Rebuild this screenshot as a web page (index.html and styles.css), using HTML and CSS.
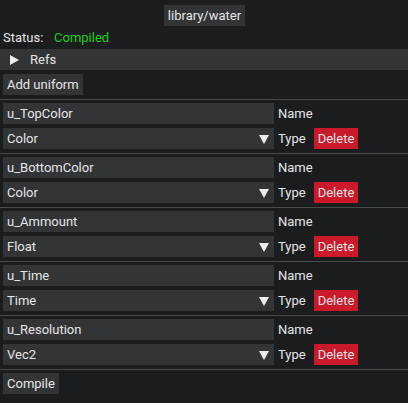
FILE: index.html
```html
<!DOCTYPE html>
<html>
<head>
<meta charset="utf-8">
<link rel="stylesheet" href="styles.css">
</head>
<body>
<div class="page">
  <div class="top"><div class="btn">library/water</div></div>
  <div class="status"><span class="status-label">Status:</span><span class="ok">Compiled</span></div>
  <div class="header"><span class="tri-right"></span><span>Refs</span></div>
  <div class="line"><div class="btn">Add uniform</div></div>
  <div class="sep"></div>

  <div class="line"><div class="field">u_TopColor</div><span class="lbl">Name</span></div>
  <div class="line"><div class="field combo"><span>Color</span><span class="arrow"><span class="tri-down"></span></span></div><span class="lbl">Type</span><div class="btn del">Delete</div></div>
  <div class="sep"></div>

  <div class="line"><div class="field">u_BottomColor</div><span class="lbl">Name</span></div>
  <div class="line"><div class="field combo"><span>Color</span><span class="arrow"><span class="tri-down"></span></span></div><span class="lbl">Type</span><div class="btn del">Delete</div></div>
  <div class="sep"></div>

  <div class="line"><div class="field">u_Ammount</div><span class="lbl">Name</span></div>
  <div class="line"><div class="field combo"><span>Float</span><span class="arrow"><span class="tri-down"></span></span></div><span class="lbl">Type</span><div class="btn del">Delete</div></div>
  <div class="sep"></div>

  <div class="line"><div class="field">u_Time</div><span class="lbl">Name</span></div>
  <div class="line"><div class="field combo"><span>Time</span><span class="arrow"><span class="tri-down"></span></span></div><span class="lbl">Type</span><div class="btn del">Delete</div></div>
  <div class="sep"></div>

  <div class="line"><div class="field">u_Resolution</div><span class="lbl">Name</span></div>
  <div class="line"><div class="field combo"><span>Vec2</span><span class="arrow"><span class="tri-down"></span></span></div><span class="lbl">Type</span><div class="btn del">Delete</div></div>
  <div class="sep"></div>

  <div class="line"><div class="btn">Compile</div></div>
</div>
</body>
</html>
```

FILE: styles.css
```css
html, body {
  margin: 0;
  padding: 0;
  background: #1b1c1e;
}
body {
  width: 408px;
  height: 403px;
  overflow: hidden;
  font-family: Roboto, "Liberation Sans", sans-serif;
  font-size: 13px;
  line-height: 15px;
  color: #e6e6e6;
}
.page {
  display: flex;
  flex-direction: column;
  gap: 4px;
  padding-top: 5px;
}
.top {
  display: flex;
  justify-content: center;
  padding-left: 1px;
}
.btn {
  background: #333436;
  padding: 3px 4px;
  height: 15px;
  white-space: nowrap;
}
.status {
  display: flex;
  padding-left: 3px;
}
.status-label {
  width: 51px;
}
.ok {
  color: #13d313;
}
.header {
  display: flex;
  align-items: center;
  background: #333436;
  height: 21px;
}
.tri-right {
  width: 0;
  height: 0;
  border-top: 5px solid transparent;
  border-bottom: 5px solid transparent;
  border-left: 9px solid #ececec;
  margin-left: 10px;
  margin-right: 11px;
}
.line {
  display: flex;
  align-items: center;
  padding-left: 3px;
}
.sep {
  height: 1px;
  margin-bottom: -1px;
  background: #48494c;
}
.field {
  width: 263px;
  height: 15px;
  padding: 3px 4px;
  background: #333436;
  white-space: nowrap;
}
.combo {
  display: flex;
  justify-content: space-between;
  align-items: center;
  padding-right: 0;
  width: 267px;
}
.arrow {
  width: 21px;
  height: 21px;
  display: flex;
  align-items: center;
  justify-content: center;
}
.tri-down {
  width: 0;
  height: 0;
  border-left: 5px solid transparent;
  border-right: 5px solid transparent;
  border-top: 9px solid #ececec;
  margin-top: 1px;
}
.lbl {
  margin-left: 4px;
}
.del {
  margin-left: 8px;
  background: #c9192b;
}
```
